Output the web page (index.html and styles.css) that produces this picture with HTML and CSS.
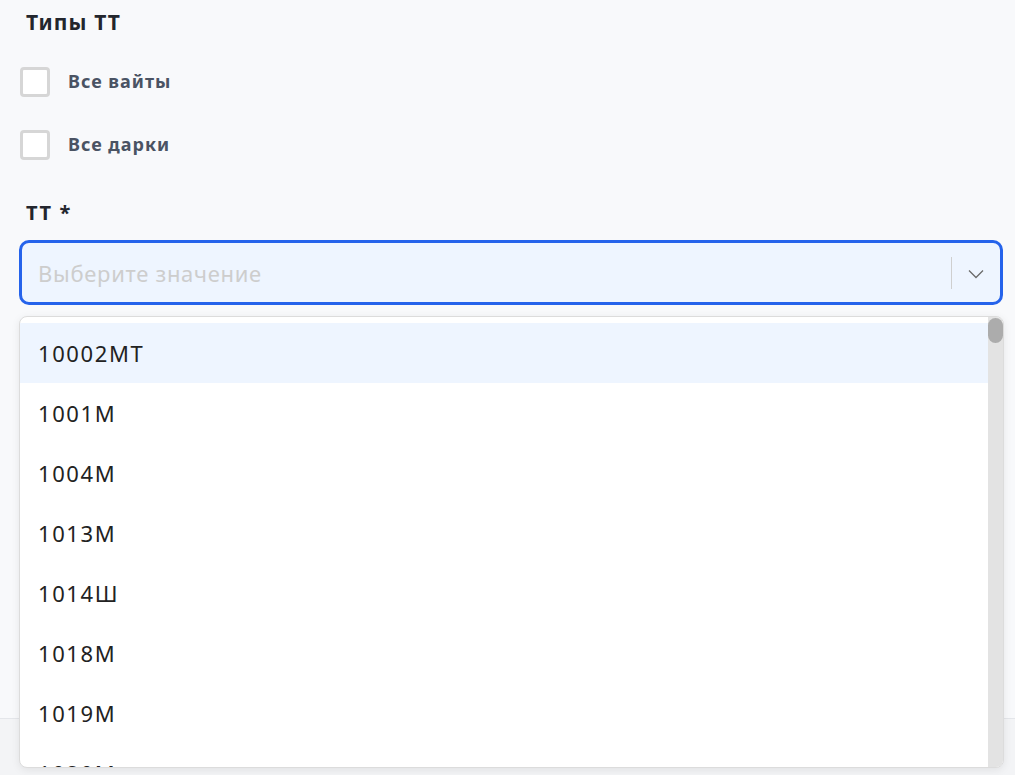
FILE: index.html
```html
<!DOCTYPE html>
<html lang="ru">
<head>
<meta charset="utf-8">
<title>Типы ТТ</title>
<link rel="stylesheet" href="styles.css">
</head>
<body>
<div class="page">
  <main class="form">
    <h2 class="section-title">Типы ТТ</h2>
    <label class="check">
      <span class="box"></span>
      <span class="check-label">Все вайты</span>
    </label>
    <label class="check">
      <span class="box"></span>
      <span class="check-label">Все дарки</span>
    </label>
    <div class="field">
      <div class="field-label">ТТ *</div>
      <div class="select-wrap">
        <div class="select">
          <span class="placeholder">Выберите значение</span>
          <span class="sep"></span>
          <span class="chevron">
            <svg width="16" height="10" viewBox="0 0 16 10"><path d="M1 1.5 L8 8.5 L15 1.5" fill="none" stroke="#6b6b6b" stroke-width="1.3"/></svg>
          </span>
        </div>
        <div class="menu">
          <ul class="options">
            <li class="option active">10002MT</li>
            <li class="option">1001M</li>
            <li class="option">1004M</li>
            <li class="option">1013M</li>
            <li class="option">1014Ш</li>
            <li class="option">1018M</li>
            <li class="option">1019M</li>
            <li class="option">1020M</li>
          </ul>
          <div class="scrollbar"><div class="thumb"></div></div>
        </div>
      </div>
    </div>
  </main>
  <footer class="footer"></footer>
</div>
</body>
</html>
```

FILE: styles.css
```css
* { box-sizing: border-box; }
html, body { margin: 0; padding: 0; }
body {
  font-family: "Noto Sans", "Open Sans", sans-serif;
  background: #f8f9fb;
  color: #222;
}
.page { min-height: 775px; display: flex; flex-direction: column; }
.form {
  height: 719px;
  padding: 7px 12px 0 20px;
  border-bottom: 1px solid #e4e6ea;
}
.footer { flex: 1; background: #f3f4f6; }

.section-title {
  margin: 0 0 0 6px;
  font-size: 21px;
  font-weight: 700;
  letter-spacing: 1.1px;
  color: #23262d;
  line-height: 30px;
}
.check {
  display: flex;
  align-items: center;
  gap: 18px;
  height: 30px;
  margin-top: 30px;
}
.check + .check { margin-top: 33px; }
.box {
  width: 30px; height: 30px;
  border: 3px solid #d6d6d6;
  border-radius: 4px;
  background: #fff;
}
.check-label {
  padding-bottom: 3px;
  font-size: 18px;
  font-weight: 700;
  letter-spacing: 1px;
  color: #4a5363;
}
.field { margin-top: 39px; }
.field-label {
  margin-left: 6px;
  font-size: 20px;
  font-weight: 700;
  letter-spacing: 1.6px;
  color: #23262d;
  line-height: 28px;
}
.select-wrap { position: relative; margin-top: 13px; }
.select {
  margin-left: -1px;
  width: 984px;
  height: 65px;
  border: 3px solid #2563eb;
  border-radius: 10px;
  background: #eef5ff;
  display: flex;
  align-items: center;
  padding-left: 16px;
}
.placeholder {
  flex: 1;
  font-size: 22px;
  letter-spacing: 0.7px;
  color: #cdcdcd;
}
.sep { width: 1px; height: 32px; background: #cfcfcf; }
.chevron { width: 48px; display: flex; justify-content: center; padding-top: 2px; }

/* dropdown popup over the rest of the form */
.menu {
  position: absolute;
  top: calc(100% + 11px);
  left: -1px;
  width: 985px;
  height: 452px;
  background: #fff;
  border: 1px solid #dcdcdc;
  border-radius: 8px;
  box-shadow: 0 2px 8px rgba(0,0,0,0.08);
  display: flex;
  overflow: hidden;
}
.options {
  list-style: none;
  margin: 0;
  padding: 6px 0 0;
  flex: 1;
  overflow: hidden;
}
.option {
  height: 60px;
  display: flex;
  align-items: center;
  padding-left: 18px;
  padding-bottom: 1px;
  font-size: 22px;
  letter-spacing: 1.6px;
  color: #222;
}
.option.active { background: #eef5ff; }
.scrollbar {
  width: 15px;
  background: #e3e3e3;
  padding-top: 1px;
}
.thumb {
  height: 25px;
  border-radius: 8px;
  background: #acacac;
}
```
